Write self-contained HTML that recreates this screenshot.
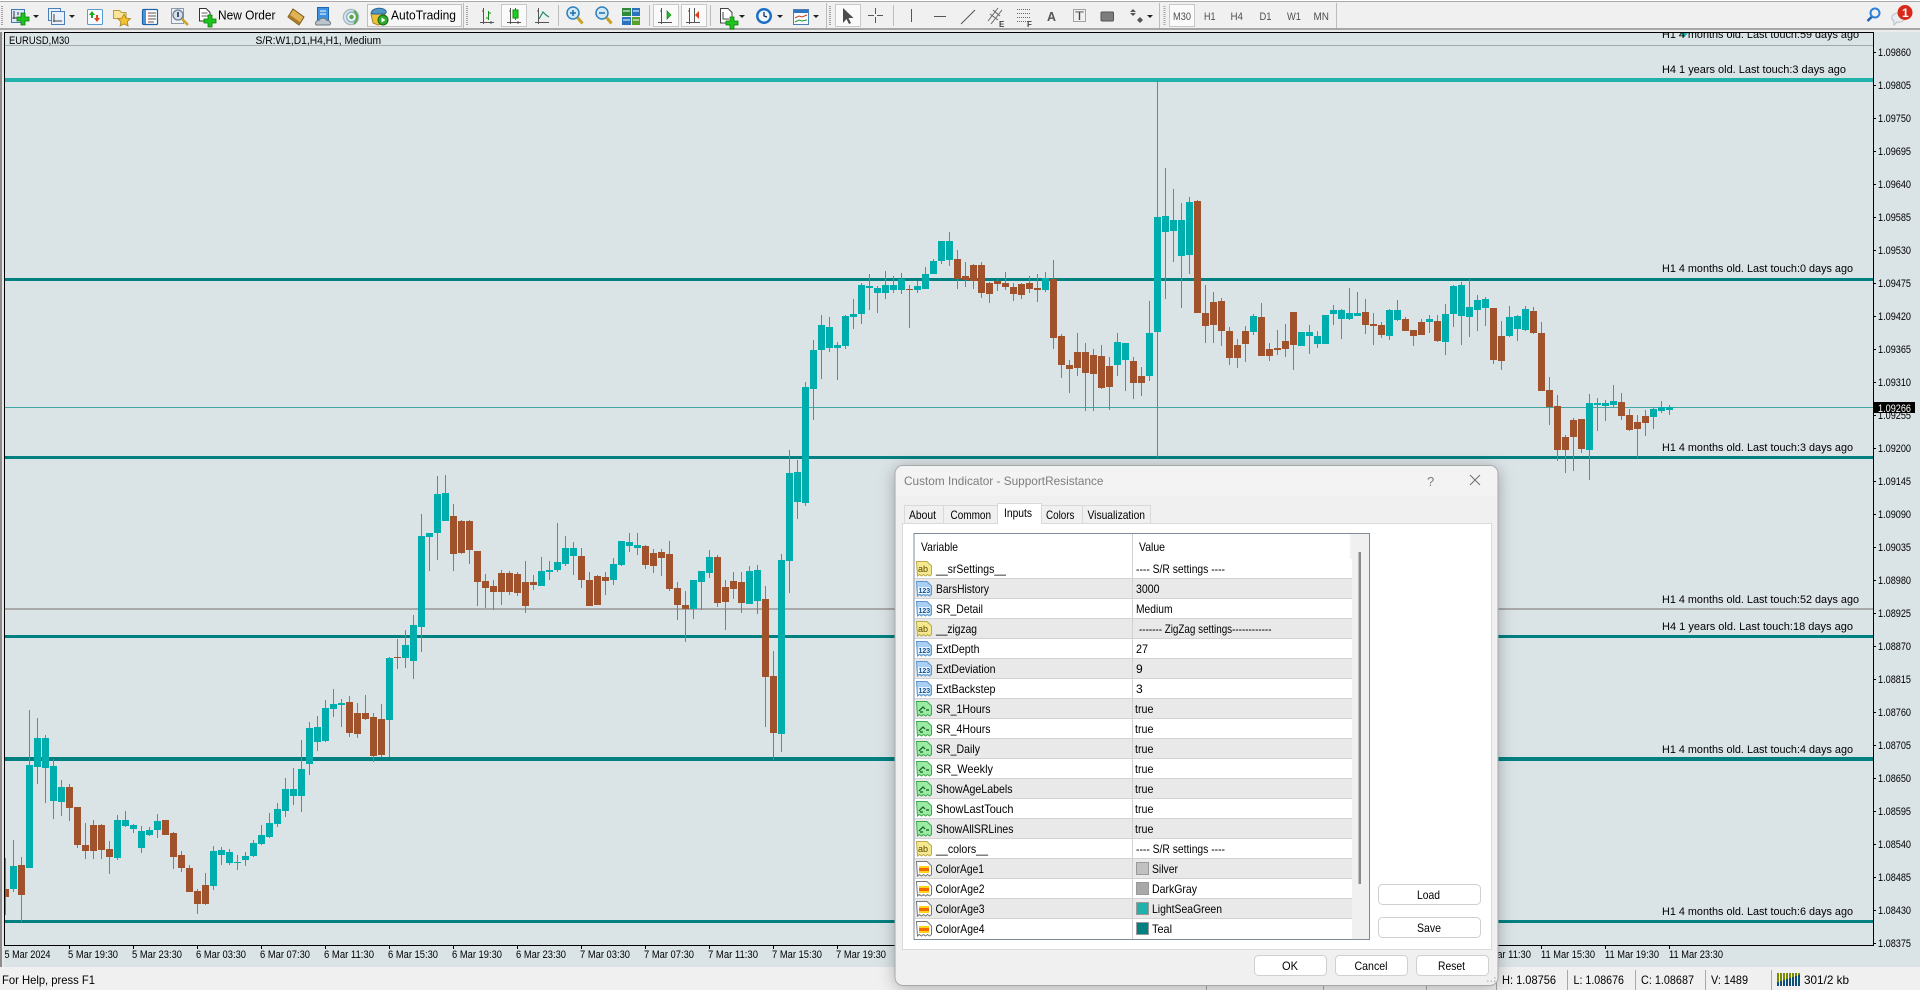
<!DOCTYPE html>
<html lang="en">
<head>
<meta charset="utf-8">
<title>EURUSD,M30</title>
<style>
html,body{margin:0;padding:0;width:1920px;height:990px;overflow:hidden;background:#f0f0f0}
svg{display:block;position:absolute;left:0;top:0}
text{font-family:"Liberation Sans",sans-serif;fill:#000}
.c{font-size:11px}
.d{font-size:12px}
.t{font-size:11px;fill:#505050}
</style>
</head>
<body>
<svg width="1920" height="990" viewBox="0 0 1920 990">
<defs>
<clipPath id="ca"><rect x="5" y="33" width="1868" height="912"/></clipPath>
<filter id="sh" x="-10%" y="-10%" width="120%" height="120%"><feDropShadow dx="0" dy="2" stdDeviation="8" flood-color="#000" flood-opacity=".28"/></filter>
<g id="doc"><path d="M.5 .5H11L15.5 5V13.5l-2 1.5-2-1.5-2 1.5-2-1.5-2 1.5-2-1.5-2 1.5z"/></g>
<g id="iab"><use href="#doc" fill="#f6e88e" stroke="#b8a94a"/><text x="2" y="11" style="font-size:9px;fill:#5a4a00">ab</text></g>
<g id="i12"><use href="#doc" fill="#a9d0f2" stroke="#5e97cc"/><rect x="2" y="6" width="12" height="7" fill="#eaf4ff"/><text x="2.5" y="12" style="font-size:7px;font-weight:bold;fill:#134f8f">123</text></g>
<g id="ibo"><use href="#doc" fill="#9ceba4" stroke="#3aa84a"/><path d="M3 10l4-4 2 2M10 9h3M4 11h3" fill="none" stroke="#0c5a1c" stroke-width="1.2"/></g>
<g id="ico"><use href="#doc" fill="#fff" stroke="#777"/><rect x="3" y="5" width="10" height="7" fill="#ffd21a"/><rect x="3" y="7" width="10" height="3" fill="#f56a00"/></g>
<g id="plus"><path d="M4 0h4v4h4v4H8v4H4V8H0V4h4z" fill="#1fc41f" stroke="#0a7d0a" stroke-width=".8"/></g>
<g id="ax"><path d="M3 0V15M0 14H14" fill="none" stroke="#555" stroke-width="1"/><path d="M0 3h3M10 12v3" stroke="#555"/></g>
<g id="arr"><path d="M0 0h6L3 3z" fill="#222"/></g>
</defs>

<!-- toolbar -->
<rect x="0" y="0" width="1920" height="32" fill="#f0f0f0"/>
<rect x="0" y="0" width="1920" height="1" fill="#fff"/>
<rect x="0" y="1" width="1920" height="1" fill="#a9a9a9"/>
<rect x="0" y="28" width="1920" height="2" fill="#a6a6a6"/>
<g fill="none" stroke="#a3a3a3" stroke-width="2" stroke-dasharray="1 1"><path d="M2 6V26M467 6V26M830 6V26M1164.500 6V26"/></g>
<g stroke="#bcbcbc" fill="none"><path d="M463.500 3V28M558.500 5V26M649.500 5V26M710.500 5V26M826.500 3V28M893.500 5V26M1159.500 3V28M1336.500 3V28"/></g>

<!-- new chart -->
<g transform="translate(11 8)"><rect x=".5" y="1.500" width="13" height="13" fill="#dceaf8" stroke="#3c78b8"/><path d="M3 3V11M1.500 10H10M7 4V7" stroke="#333" fill="none"/><use href="#plus" x="6" y="5"/></g>
<use href="#arr" x="33" y="15"/>
<g transform="translate(48 8)"><rect x=".5" y=".5" width="12" height="12" fill="#e8f0f9" stroke="#4a80ba"/><rect x="3.500" y="3.500" width="13" height="13" fill="#e8f0f9" stroke="#4a80ba"/><path d="M6 6V14M5 13H14" stroke="#444" fill="none"/></g>
<use href="#arr" x="69" y="15"/>
<!-- market watch -->
<g transform="translate(87 9)"><rect x=".5" y=".5" width="15" height="15" rx="1" fill="#f5fbff" stroke="#5a9ad0"/><path d="M5 2l-3 4h2v3h2V6h2z" fill="#21a821"/><path d="M10 13l3-4h-2V6H9v3H7z" fill="#e2401c"/></g>
<!-- star folder -->
<g transform="translate(113 8)"><path d="M.5 2.500h6l2 2H13v6H.5z" fill="#fbe39a" stroke="#b99a3a"/><path d="M11 6l2 4 4.500.6-3.200 3 .8 4.400-4-2.100-4 2.100.8-4.400-3.200-3L9 10z" fill="#f3c030" stroke="#a8801a" stroke-width=".8"/></g>
<!-- navigator -->
<g transform="translate(142 9)"><rect x=".5" y=".5" width="15" height="15" rx="1" fill="#fff" stroke="#1d62ac" stroke-width="1.200"/><rect x="1" y="1" width="3" height="14" fill="#4a92d8"/><path d="M6 4h8M6 7h8M6 10h8M6 13h6" stroke="#555"/><path d="M6 4h1M6 7h1M6 10h1M6 13h1" stroke="#d03020"/></g>
<!-- tester -->
<g transform="translate(171 8)"><rect x=".5" y=".5" width="12" height="15" fill="#eef2f6" stroke="#8a9aaa"/><circle cx="7" cy="7" r="5" fill="#d5e0ea" stroke="#6b7f92" stroke-width="1.300"/><path d="M7 4v5" stroke="#435a70" stroke-width="2"/><path d="M11 11l6 6" stroke="#c9a227" stroke-width="2.500"/></g>
<!-- new order -->
<g transform="translate(199 8)"><path d="M.5 .5H7L11 4.500V13H.5z" fill="#fff" stroke="#333"/><path d="M2.500 5h6M2.500 8h6" stroke="#666"/><use href="#plus" x="5" y="7"/></g>
<text x="218" y="19.500" style="font-size:12.500px" textLength="57.500" lengthAdjust="spacingAndGlyphs">New Order</text>
<!-- gold book -->
<g transform="translate(287 8)"><path d="M6 1l11 8-5 8L1 9z" fill="#e0b355" stroke="#7a5518"/><path d="M1 9l11 8 1.500-2.500L3 7" fill="#a87a28"/></g>
<!-- cloud doc -->
<g transform="translate(315 7)"><rect x="2.500" y=".5" width="11" height="13" fill="#3f92e0" stroke="#1e66b0"/><path d="M5 4h6M5 7h6" stroke="#fff"/><path d="M1 18c-1.500-3 1-5 3-4.500 1-3 7-3 8 0 3-.5 4.500 3 2.500 4.500z" fill="#b9c4cc" stroke="#6d7a85"/></g>
<!-- radio -->
<g transform="translate(342 8)" fill="none"><circle cx="9" cy="9" r="7.500" stroke="#a8b8c2" stroke-width="1.500"/><circle cx="9.500" cy="9" r="5" stroke="#7fb7c9" stroke-width="1.500"/><path d="M12 3c4 3 4 9 0 13" stroke="#58a84c" stroke-width="2"/><circle cx="9.500" cy="9" r="2.200" fill="#58a84c"/></g>
<!-- autotrading -->
<rect x="367.500" y="4.500" width="94" height="22" fill="#f7f7f7" stroke="#c0c0c0"/>
<g transform="translate(370 7)"><path d="M1 7h14l-1.500 9L8 18 3 16z" fill="#ecc03c" stroke="#a88820"/><path d="M1 6c2-6 12-6 15-2 1 2-1 3-4 3H3z" fill="#4d97c9" stroke="#2c6690"/><circle cx="13" cy="13" r="5" fill="#2eaa2e" stroke="#166a16"/><path d="M11.500 10.500l4 2.500-4 2.500z" fill="#fff"/></g>
<text x="391" y="19.500" style="font-size:12.500px" textLength="65" lengthAdjust="spacingAndGlyphs">AutoTrading</text>
<!-- chart types -->
<g fill="none" stroke="#555"><path d="M483.500 8V24M480 22.500H494M482 11h1.500M491 21v3"/><path d="M488.500 11V20M486 18h2.500M488.500 13H491" stroke="#138a13"/></g>
<rect x="501.500" y="4.500" width="25" height="22" fill="#fafafa" stroke="#c8c8c8"/>
<g fill="none" stroke="#555"><path d="M510.500 8V24M507 22.500H521M509 11h1.500M518 21v3"/><path d="M515.500 8V20"  stroke="#138a13"/></g><rect x="513" y="10" width="5" height="8" fill="#1fd11f" stroke="#138a13"/>
<g fill="none" stroke="#555"><path d="M538.500 8V24M535 22.500H549M537 11h1.500"/><path d="M539 19l4-7 3 3 3 2" stroke="#1e8a6a" stroke-width="1.200"/></g>
<!-- zoom -->
<g fill="none"><circle cx="573" cy="13" r="6" fill="#d3e8f8" stroke="#2f82bb" stroke-width="1.500"/><path d="M570 13h6M573 10v6" stroke="#1f6ea8" stroke-width="1.500"/><path d="M577.500 17.500l5 6" stroke="#c9a227" stroke-width="3"/><circle cx="602" cy="13" r="6" fill="#d3e8f8" stroke="#2f82bb" stroke-width="1.500"/><path d="M599 13h6" stroke="#1f6ea8" stroke-width="1.500"/><path d="M606.500 17.500l5 6" stroke="#c9a227" stroke-width="3"/></g>
<!-- tile -->
<g><rect x="622" y="8" width="9" height="8" fill="#2c8b3a"/><rect x="632" y="8" width="8" height="8" fill="#2a73c0"/><rect x="622" y="17" width="9" height="8" fill="#2a73c0"/><rect x="632" y="17" width="8" height="8" fill="#5aa02c"/><path d="M623 11h7M633 11h6M623 20h7M633 20h6" stroke="#fff"/></g>
<!-- autoscroll / shift -->
<rect x="653.500" y="4.500" width="25" height="22" fill="#fafafa" stroke="#c8c8c8"/>
<g fill="none" stroke="#555"><path d="M661.500 8V24M658 22.500H672M660 11h1.500"/></g><path d="M667 11l4 4-4 4z" fill="#24c024" stroke="#127a12" stroke-width=".7"/>
<rect x="681.500" y="4.500" width="25" height="22" fill="#fafafa" stroke="#c8c8c8"/>
<g fill="none" stroke="#555"><path d="M689.500 8V24M686 22.500H700M688 11h1.500M694.500 8V22"/></g><path d="M699 11l-4 4 4 4z" fill="#e03a1c"/>
<!-- templates -->
<g transform="translate(720 8)"><path d="M.5 .5H8L12 4.500V15H.5z" fill="#fff" stroke="#444"/><path d="M3 4v7h6" stroke="#444" fill="none"/><use href="#plus" x="6" y="9"/></g>
<use href="#arr" x="739" y="15"/>
<g transform="translate(756 7)"><circle cx="8" cy="9" r="8" fill="#1d6fc6"/><circle cx="8" cy="9" r="5.500" fill="#eef6ff"/><path d="M8 5v4l3 1" stroke="#123" fill="none" stroke-width="1.200"/></g>
<use href="#arr" x="777" y="15"/>
<g transform="translate(793 9)"><rect x=".5" y=".5" width="15" height="15" fill="#f8fbff" stroke="#4a7fb5"/><rect x="1" y="1" width="14" height="3" fill="#2f75c0"/><path d="M2 9l4-2 3 1 5-2" stroke="#c8401c" fill="none"/><path d="M2 13l4-2 3 1 5-1" stroke="#2a9a2a" fill="none"/></g>
<use href="#arr" x="813" y="15"/>
<!-- cursor -->
<rect x="835.500" y="4.500" width="25" height="22" fill="#fafafa" stroke="#c8c8c8"/>
<path d="M843 8l0 15 3.500-4 2.500 5 2-1-2.500-5h5z" fill="#4b4b4b"/>
<g stroke="#555" fill="none"><path d="M875.500 8V14M875.500 17V23M868 15.500H874M877 15.500H883M911.500 9V22M934 16.500H946M961 24L975 10" stroke-width="1"/></g>
<g stroke="#666" fill="none"><path d="M988 21L998 8M991 24L1002 10M990 14l8 6M993 10l7 6"/><path d="M1017 9.500h14M1017 13.500h14M1017 17.500h14M1017 21.500h11" stroke-dasharray="1 1"/></g>
<text x="999" y="27" style="font-size:8px;font-weight:bold;fill:#444">E</text>
<text x="1027" y="27" style="font-size:8px;font-weight:bold;fill:#444">F</text>
<text x="1047" y="21" style="font-size:13px;font-weight:bold;fill:#555" textLength="9" lengthAdjust="spacingAndGlyphs">A</text>
<rect x="1073.500" y="9.500" width="12" height="12" fill="none" stroke="#555" stroke-dasharray="1 1"/>
<text x="1075" y="20" style="font-size:12px;fill:#444" textLength="9" lengthAdjust="spacingAndGlyphs">T</text>
<rect x="1101" y="12" width="12.500" height="9" rx="1" fill="#7d7d7d" stroke="#555"/>
<path d="M1133 9l3 3h-6zM1133 16l-3-3h6zM1140 17l3 3-3 3-3-3z" fill="#555"/>
<use href="#arr" x="1147" y="15"/>
<!-- timeframes -->
<rect x="1169.500" y="4.500" width="25" height="22" fill="#fafafa" stroke="#c8c8c8"/>
<text class="t" x="1173" y="20" textLength="18" lengthAdjust="spacingAndGlyphs">M30</text>
<text class="t" x="1204" y="20" textLength="11.500" lengthAdjust="spacingAndGlyphs">H1</text>
<text class="t" x="1230.500" y="20" textLength="12.500" lengthAdjust="spacingAndGlyphs">H4</text>
<text class="t" x="1259.500" y="20" textLength="12" lengthAdjust="spacingAndGlyphs">D1</text>
<text class="t" x="1287" y="20" textLength="14" lengthAdjust="spacingAndGlyphs">W1</text>
<text class="t" x="1313.500" y="20" textLength="15.500" lengthAdjust="spacingAndGlyphs">MN</text>
<!-- right toolbar -->
<g fill="none"><circle cx="1875" cy="13" r="4.500" stroke="#2b80d8" stroke-width="2"/><path d="M1871.500 17l-4 4" stroke="#1f5fb0" stroke-width="2.500"/></g>
<path d="M1893 15c3-3 11-3 12 0 2 5-4 8-8 7l-3 3 0-4c-2-1-3-4-1-6z" fill="#e9edf0" stroke="#b7bfc6"/>
<circle cx="1905" cy="12.500" r="7.500" fill="#d9281a"/>
<text x="1902" y="17" style="font-size:12px;font-weight:bold;fill:#fff">1</text>

<!-- chart window -->
<rect x="0" y="30" width="1920" height="2" fill="#ececec"/>
<rect x="0" y="32" width="2" height="935" fill="#8c8c8c"/>
<rect x="2" y="32" width="2" height="935" fill="#e8e8e8"/>
<rect x="4" y="32" width="1916" height="935" fill="#dae3e6"/>

<g clip-path="url(#ca)">
<!-- horizontal lines -->
<rect x="5" y="45" width="1868" height="1" fill="#a4a8aa"/>
<rect x="5" y="78" width="1869" height="4" fill="#20b2aa"/>
<rect x="5" y="278" width="1869" height="3" fill="#008080"/>
<rect x="5" y="407" width="1869" height="1" fill="#3fa8a4"/>
<rect x="5" y="456" width="1869" height="3" fill="#008080"/>
<rect x="5" y="608" width="1869" height="2" fill="#a9a9a9"/>
<rect x="5" y="635" width="1869" height="3" fill="#008080"/>
<rect x="5" y="757" width="1869" height="4" fill="#008080"/>
<rect x="5" y="920" width="1869" height="3" fill="#008080"/>
<!-- labels -->
<polygon points="1680,33 1688,33 1684,37.500" fill="#20b2aa"/>
<text class="c" x="1662" y="38" textLength="197" lengthAdjust="spacingAndGlyphs">H1 4 months old. Last touch:59 days ago</text>
<text class="c" x="1662" y="73" textLength="184" lengthAdjust="spacingAndGlyphs">H4 1 years old. Last touch:3 days ago</text>
<text class="c" x="1662" y="272" textLength="191" lengthAdjust="spacingAndGlyphs">H1 4 months old. Last touch:0 days ago</text>
<text class="c" x="1662" y="451" textLength="191" lengthAdjust="spacingAndGlyphs">H1 4 months old. Last touch:3 days ago</text>
<text class="c" x="1662" y="603" textLength="197" lengthAdjust="spacingAndGlyphs">H1 4 months old. Last touch:52 days ago</text>
<text class="c" x="1662" y="630" textLength="191" lengthAdjust="spacingAndGlyphs">H4 1 years old. Last touch:18 days ago</text>
<text class="c" x="1662" y="753" textLength="191" lengthAdjust="spacingAndGlyphs">H1 4 months old. Last touch:4 days ago</text>
<text class="c" x="1662" y="915" textLength="191" lengthAdjust="spacingAndGlyphs">H1 4 months old. Last touch:6 days ago</text>

<!-- candles A -->
<g transform="matrix(1 0 0 .33333333 0 680)" shape-rendering="crispEdges">
<path stroke="#708090" fill="none" d="M5.500 534V705M13.500 480V636M21.500 531V726M29.500 90V564M37.500 114V312M45.500 165V369M53.500 237V417M61.500 300V408M69.500 312V423M77.500 381V504M85.500 429V537M93.500 420V537M101.500 432V537M109.500 483V582M117.500 405V540M125.500 393V441M133.500 432V459M141.500 438V519M149.500 441V468M157.500 402V474M165.500 420V465M173.500 456V567M181.500 513V576M189.500 555V636M197.500 627V702M205.500 579V675M213.500 498V630M221.500 501V555M229.500 507V555M237.500 525V570M245.500 516V558M253.500 480V531M261.500 435V495M269.500 399V474M277.500 369V441M285.500 294V411M293.500 264V375M301.500 180V396M309.500 126V285M317.500 108V213M325.500 60V186M333.500 27V111M341.500 57V141M349.500 48V171M357.500 69V174M365.500 45V120M373.500 99V246M381.500 72V232"/>
<path fill="#00adad" d="M10 558h7V627h-7zM26 255h7V564h-7zM34 174h7V261h-7zM42 174h7V264h-7zM50 258h7V363h-7zM58 321h7V366h-7zM114 420h7V534h-7zM122 420h7V438h-7zM130 435h7V447h-7zM138 453h7V504h-7zM146 450h7V465h-7zM154 423h7V450h-7zM210 513h7V618h-7zM218 510h7V525h-7zM226 516h7V549h-7zM234 546h7V549h-7zM242 528h7V540h-7zM250 489h7V528h-7zM258 465h7V492h-7zM266 429h7V471h-7zM274 387h7V432h-7zM282 327h7V393h-7zM290 327h7V348h-7zM298 267h7V348h-7zM306 144h7V252h-7zM314 141h7V186h-7zM322 84h7V183h-7zM330 72h7V87h-7zM338 69h7V75h-7z"/>
<path fill="#a0522d" d="M2 627h7V651h-7zM18 555h7V645h-7zM66 321h7V384h-7zM74 381h7V495h-7zM82 495h7V513h-7zM90 435h7V513h-7zM98 435h7V510h-7zM106 507h7V531h-7zM162 420h7V465h-7zM170 459h7V531h-7zM178 525h7V564h-7zM186 564h7V636h-7zM194 633h7V672h-7zM202 615h7V672h-7zM346 66h7V159h-7zM354 99h7V162h-7zM362 99h7V117h-7zM370 111h7V228h-7zM378 117h7V225h-7z"/>
</g>
<!-- candles B -->
<g transform="matrix(1 0 0 .33333333 0 440)" shape-rendering="crispEdges">
<path stroke="#708090" fill="none" d="M389.500 651V951M397.500 597V687M405.500 570V684M413.500 525V717M421.500 222V636M429.500 279V393M437.500 108V360M445.500 105V243M453.500 192V393M461.500 240V342M469.500 240V372M477.500 333V498M485.500 402V504M493.500 420V510M501.500 390V495M509.500 393V465M517.500 396V468M525.500 363V519M533.500 405V450M541.500 351V438M549.500 363V420M557.500 249V396M565.500 288V378M573.500 306V405M581.500 324V444M589.500 396V498M597.500 405V495M605.500 396V465M613.500 354V435M621.500 303V378M629.500 279V336M637.500 279V345M645.500 315V387M653.500 327V399M661.500 327V408M669.500 303V453M677.500 426V540M685.500 453V606M693.500 420V537M701.500 393V510M709.500 330V414M717.500 345V501M725.500 420V570M733.500 396V477M741.500 396V519M749.500 378V492M757.500 375V522M765.500 438V861M773.500 633V960M781.500 342V936M789.500 30V459M797.500 60V237M805.500 -174V198"/>
<path fill="#00adad" d="M386 654h7V840h-7zM402 615h7V654h-7zM410 555h7V663h-7zM418 288h7V561h-7zM426 279h7V291h-7zM434 162h7V279h-7zM442 159h7V243h-7zM538 393h7V438h-7zM546 390h7V396h-7zM554 366h7V390h-7zM562 324h7V372h-7zM570 324h7V348h-7zM610 372h7V420h-7zM618 303h7V375h-7zM626 306h7V318h-7zM634 315h7V324h-7zM690 420h7V507h-7zM698 393h7V426h-7zM706 351h7V399h-7zM746 393h7V492h-7zM754 390h7V483h-7zM778 360h7V882h-7zM786 99h7V363h-7zM794 96h7V186h-7zM802 -159h7V189h-7z"/>
<path fill="#a0522d" d="M394 651h7V654h-7zM450 228h7V342h-7zM458 243h7V339h-7zM466 243h7V330h-7zM474 333h7V426h-7zM482 423h7V444h-7zM490 438h7V456h-7zM498 399h7V456h-7zM506 399h7V456h-7zM514 402h7V459h-7zM522 426h7V498h-7zM530 426h7V435h-7zM578 348h7V420h-7zM586 420h7V498h-7zM594 408h7V495h-7zM602 411h7V423h-7zM642 318h7V375h-7zM650 339h7V378h-7zM658 336h7V354h-7zM666 342h7V447h-7zM674 444h7V495h-7zM682 495h7V507h-7zM714 351h7V489h-7zM722 441h7V486h-7zM730 423h7V447h-7zM738 426h7V489h-7zM762 477h7V711h-7zM770 708h7V879h-7z"/>
</g>
<!-- candles C -->
<g transform="matrix(1 0 0 .33333333 0 200)" shape-rendering="crispEdges">
<path stroke="#708090" fill="none" d="M813.500 420V660M821.500 345V537M829.500 351V456M837.500 426V540M845.500 345V447M853.500 297V387M861.500 249V372M869.500 222V330M877.500 258V339M885.500 213V297M893.500 228V279M901.500 219V282M909.500 255V384M917.500 243V279M925.500 201V267M933.500 177V222M941.500 123V192M949.500 96V198M957.500 150V267M965.500 186V261M973.500 192V267M981.500 186V294M989.500 246V309M997.500 237V273M1005.500 216V270M1013.500 249V303M1021.500 249V297M1029.500 228V279M1037.500 222V306M1045.500 216V276M1053.500 180V447M1061.500 402V534M1069.500 480V579M1077.500 399V528M1085.500 429V633M1093.500 447V633M1101.500 435V567M1109.500 471V630M1117.500 399V528M1125.500 429V573M1133.500 471V597M1141.500 501V588M1149.500 303V543"/>
<path fill="#00adad" d="M810 450h7V567h-7zM818 375h7V450h-7zM826 381h7V444h-7zM834 435h7V444h-7zM842 348h7V438h-7zM850 342h7V351h-7zM858 255h7V342h-7zM866 258h7V264h-7zM874 264h7V279h-7zM882 255h7V279h-7zM890 255h7V270h-7zM898 237h7V270h-7zM914 258h7V270h-7zM922 222h7V267h-7zM930 183h7V222h-7zM938 123h7V183h-7zM946 123h7V180h-7zM1042 234h7V270h-7zM1114 426h7V495h-7zM1122 429h7V480h-7zM1146 399h7V528h-7z"/>
<path fill="#a0522d" d="M906 267h7V270h-7zM954 177h7V237h-7zM962 228h7V240h-7zM970 195h7V243h-7zM978 195h7V279h-7zM986 249h7V282h-7zM994 243h7V252h-7zM1002 249h7V261h-7zM1010 261h7V282h-7zM1018 252h7V285h-7zM1026 249h7V267h-7zM1034 264h7V270h-7zM1050 237h7V414h-7zM1058 408h7V495h-7zM1066 495h7V507h-7zM1074 456h7V504h-7zM1082 456h7V519h-7zM1090 465h7V522h-7zM1098 468h7V564h-7zM1106 498h7V561h-7zM1130 483h7V549h-7zM1138 528h7V549h-7z"/>
</g>
<!-- candles D -->
<g transform="matrix(1 0 0 .33333333 0 150)" shape-rendering="crispEdges">
<path stroke="#708090" fill="none" d="M1157.500 -210V922M1165.500 54V447M1173.500 117V336M1181.500 159V474M1189.500 141V372M1197.500 150V489M1205.500 405V579M1213.500 426V579M1221.500 444V588M1229.500 531V645M1237.500 567V654M1245.500 528V636M1253.500 492V555M1261.500 459V618M1269.500 579V633M1277.500 540V615M1285.500 522V621M1293.500 486V660M1301.500 546V588M1309.500 525V612M1317.500 543V594M1325.500 495V582M1333.500 465V525M1341.500 477V567M1349.500 414V510M1357.500 426V498M1365.500 447V552M1373.500 489V585M1381.500 516V564M1389.500 477V570M1397.500 450V513M1405.500 501V543M1413.500 540V588M1421.500 507V555M1429.500 495V549M1437.500 495V576M1445.500 462V615M1453.500 405V531M1461.500 396V585M1469.500 387V561M1477.500 435V543M1485.500 441V528M1493.500 474V642M1501.500 513V660M1509.500 468V561M1517.500 495V573M1525.500 468V543M1533.500 471V552M1541.500 516V723M1549.500 681V825M1557.500 735V933M1565.500 855V969M1573.500 804V963M1581.500 807V909M1589.500 732V990M1597.500 744V843M1605.500 750V813M1613.500 705V771M1621.500 729V810M1629.500 777V843M1637.500 795V924M1645.500 780V858M1653.500 774V837M1661.500 753V789M1669.500 765V795"/>
<path fill="#00adad" d="M1154 201h7V546h-7zM1162 198h7V246h-7zM1170 210h7V243h-7zM1178 210h7V318h-7zM1186 156h7V315h-7zM1250 498h7V546h-7zM1298 546h7V588h-7zM1306 546h7V558h-7zM1314 558h7V582h-7zM1322 495h7V582h-7zM1330 480h7V492h-7zM1338 480h7V507h-7zM1346 489h7V507h-7zM1354 489h7V498h-7zM1386 480h7V558h-7zM1394 480h7V510h-7zM1426 507h7V516h-7zM1442 492h7V576h-7zM1450 408h7V492h-7zM1458 405h7V498h-7zM1466 471h7V501h-7zM1474 450h7V480h-7zM1482 447h7V474h-7zM1506 501h7V558h-7zM1514 498h7V537h-7zM1522 477h7V540h-7zM1586 759h7V900h-7zM1594 759h7V765h-7zM1602 759h7V768h-7zM1610 753h7V765h-7zM1650 777h7V801h-7zM1658 771h7V783h-7zM1666 771h7V780h-7z"/>
<path fill="#a0522d" d="M1194 153h7V489h-7zM1202 489h7V528h-7zM1210 456h7V525h-7zM1218 453h7V543h-7zM1226 543h7V624h-7zM1234 585h7V624h-7zM1242 543h7V582h-7zM1258 501h7V618h-7zM1266 597h7V618h-7zM1274 594h7V600h-7zM1282 573h7V597h-7zM1290 486h7V585h-7zM1362 486h7V525h-7zM1370 522h7V528h-7zM1378 525h7V555h-7zM1402 507h7V543h-7zM1410 540h7V558h-7zM1418 516h7V555h-7zM1434 513h7V573h-7zM1490 474h7V630h-7zM1498 558h7V633h-7zM1530 483h7V549h-7zM1538 549h7V723h-7zM1546 720h7V771h-7zM1554 768h7V900h-7zM1562 861h7V900h-7zM1570 810h7V861h-7zM1578 807h7V897h-7zM1618 756h7V798h-7zM1626 795h7V840h-7zM1634 816h7V837h-7zM1642 798h7V819h-7z"/>
</g>
</g>

<!-- frame -->
<rect x="4" y="32" width="1870" height="1" fill="#000"/>
<rect x="4" y="32" width="1" height="914" fill="#000"/>
<rect x="1873" y="32" width="1" height="914" fill="#000"/>
<rect x="4" y="945" width="1870" height="1" fill="#000"/>
<text class="c" x="9" y="44" textLength="60.500" lengthAdjust="spacingAndGlyphs">EURUSD,M30</text>
<text class="c" x="255.500" y="44" textLength="125.500" lengthAdjust="spacingAndGlyphs">S/R:W1,D1,H4,H1, Medium</text>

<!-- price axis -->
<path stroke="#000" fill="none" d="M1874 52.500h2M1874 85.500h2M1874 118.500h2M1874 151.500h2M1874 184.500h2M1874 217.500h2M1874 250.500h2M1874 283.500h2M1874 316.500h2M1874 349.500h2M1874 382.500h2M1874 415.500h2M1874 448.500h2M1874 481.500h2M1874 514.500h2M1874 547.500h2M1874 580.500h2M1874 613.500h2M1874 646.500h2M1874 679.500h2M1874 712.500h2M1874 745.500h2M1874 778.500h2M1874 811.500h2M1874 844.500h2M1874 877.500h2M1874 910.500h2M1874 943.500h2"/>
<g class="c">
<text class="c" x="1878" y="56" textLength="33" lengthAdjust="spacingAndGlyphs">1.09860</text>
<text class="c" x="1878" y="89" textLength="33" lengthAdjust="spacingAndGlyphs">1.09805</text>
<text class="c" x="1878" y="122" textLength="33" lengthAdjust="spacingAndGlyphs">1.09750</text>
<text class="c" x="1878" y="155" textLength="33" lengthAdjust="spacingAndGlyphs">1.09695</text>
<text class="c" x="1878" y="188" textLength="33" lengthAdjust="spacingAndGlyphs">1.09640</text>
<text class="c" x="1878" y="221" textLength="33" lengthAdjust="spacingAndGlyphs">1.09585</text>
<text class="c" x="1878" y="254" textLength="33" lengthAdjust="spacingAndGlyphs">1.09530</text>
<text class="c" x="1878" y="287" textLength="33" lengthAdjust="spacingAndGlyphs">1.09475</text>
<text class="c" x="1878" y="320" textLength="33" lengthAdjust="spacingAndGlyphs">1.09420</text>
<text class="c" x="1878" y="353" textLength="33" lengthAdjust="spacingAndGlyphs">1.09365</text>
<text class="c" x="1878" y="386" textLength="33" lengthAdjust="spacingAndGlyphs">1.09310</text>
<text class="c" x="1878" y="419" textLength="33" lengthAdjust="spacingAndGlyphs">1.09255</text>
<text class="c" x="1878" y="452" textLength="33" lengthAdjust="spacingAndGlyphs">1.09200</text>
<text class="c" x="1878" y="485" textLength="33" lengthAdjust="spacingAndGlyphs">1.09145</text>
<text class="c" x="1878" y="518" textLength="33" lengthAdjust="spacingAndGlyphs">1.09090</text>
<text class="c" x="1878" y="551" textLength="33" lengthAdjust="spacingAndGlyphs">1.09035</text>
<text class="c" x="1878" y="584" textLength="33" lengthAdjust="spacingAndGlyphs">1.08980</text>
<text class="c" x="1878" y="617" textLength="33" lengthAdjust="spacingAndGlyphs">1.08925</text>
<text class="c" x="1878" y="650" textLength="33" lengthAdjust="spacingAndGlyphs">1.08870</text>
<text class="c" x="1878" y="683" textLength="33" lengthAdjust="spacingAndGlyphs">1.08815</text>
<text class="c" x="1878" y="716" textLength="33" lengthAdjust="spacingAndGlyphs">1.08760</text>
<text class="c" x="1878" y="749" textLength="33" lengthAdjust="spacingAndGlyphs">1.08705</text>
<text class="c" x="1878" y="782" textLength="33" lengthAdjust="spacingAndGlyphs">1.08650</text>
<text class="c" x="1878" y="815" textLength="33" lengthAdjust="spacingAndGlyphs">1.08595</text>
<text class="c" x="1878" y="848" textLength="33" lengthAdjust="spacingAndGlyphs">1.08540</text>
<text class="c" x="1878" y="881" textLength="33" lengthAdjust="spacingAndGlyphs">1.08485</text>
<text class="c" x="1878" y="914" textLength="33" lengthAdjust="spacingAndGlyphs">1.08430</text>
<text class="c" x="1878" y="947" textLength="33" lengthAdjust="spacingAndGlyphs">1.08375</text>
</g>
<rect x="1874" y="402" width="41" height="11" fill="#000"/>
<text class="c" x="1878" y="412" style="fill:#fff" textLength="33" lengthAdjust="spacingAndGlyphs">1.09266</text>

<!-- time axis -->
<path stroke="#000" fill="none" d="M69.500 946v3M133.500 946v3M197.500 946v3M261.500 946v3M325.500 946v3M389.500 946v3M453.500 946v3M517.500 946v3M581.500 946v3M645.500 946v3M709.500 946v3M773.500 946v3M837.500 946v3M1541.500 946v3M1605.500 946v3M1669.500 946v3"/>
<text class="c" x="4.500" y="958" textLength="46" lengthAdjust="spacingAndGlyphs">5 Mar 2024</text>
<text class="c" x="68" y="958" textLength="50" lengthAdjust="spacingAndGlyphs">5 Mar 19:30</text>
<text class="c" x="132" y="958" textLength="50" lengthAdjust="spacingAndGlyphs">5 Mar 23:30</text>
<text class="c" x="196" y="958" textLength="50" lengthAdjust="spacingAndGlyphs">6 Mar 03:30</text>
<text class="c" x="260" y="958" textLength="50" lengthAdjust="spacingAndGlyphs">6 Mar 07:30</text>
<text class="c" x="324" y="958" textLength="50" lengthAdjust="spacingAndGlyphs">6 Mar 11:30</text>
<text class="c" x="388" y="958" textLength="50" lengthAdjust="spacingAndGlyphs">6 Mar 15:30</text>
<text class="c" x="452" y="958" textLength="50" lengthAdjust="spacingAndGlyphs">6 Mar 19:30</text>
<text class="c" x="516" y="958" textLength="50" lengthAdjust="spacingAndGlyphs">6 Mar 23:30</text>
<text class="c" x="580" y="958" textLength="50" lengthAdjust="spacingAndGlyphs">7 Mar 03:30</text>
<text class="c" x="644" y="958" textLength="50" lengthAdjust="spacingAndGlyphs">7 Mar 07:30</text>
<text class="c" x="708" y="958" textLength="50" lengthAdjust="spacingAndGlyphs">7 Mar 11:30</text>
<text class="c" x="772" y="958" textLength="50" lengthAdjust="spacingAndGlyphs">7 Mar 15:30</text>
<text class="c" x="836" y="958" textLength="50" lengthAdjust="spacingAndGlyphs">7 Mar 19:30</text>
<text class="c" x="1477" y="958" textLength="54" lengthAdjust="spacingAndGlyphs">11 Mar 11:30</text>
<text class="c" x="1541" y="958" textLength="54" lengthAdjust="spacingAndGlyphs">11 Mar 15:30</text>
<text class="c" x="1605" y="958" textLength="54" lengthAdjust="spacingAndGlyphs">11 Mar 19:30</text>
<text class="c" x="1669" y="958" textLength="54" lengthAdjust="spacingAndGlyphs">11 Mar 23:30</text>

<!-- status bar -->
<rect x="0" y="967" width="1920" height="23" fill="#f0f0f0"/>
<text class="d" x="2" y="984" textLength="93" lengthAdjust="spacingAndGlyphs">For Help, press F1</text>
<path stroke="#a8a8a8" fill="none" d="M1206.500 970V990M1323.500 970V990M1426.500 970V990M1496.500 970V990M1567.500 970V990M1635.500 970V990M1705.500 970V990M1771.500 970V990"/>
<text class="d" x="1502" y="984" textLength="54" lengthAdjust="spacingAndGlyphs">H: 1.08756</text>
<text class="d" x="1573.500" y="984" textLength="50.500" lengthAdjust="spacingAndGlyphs">L: 1.08676</text>
<text class="d" x="1641" y="984" textLength="53" lengthAdjust="spacingAndGlyphs">C: 1.08687</text>
<text class="d" x="1711" y="984" textLength="37" lengthAdjust="spacingAndGlyphs">V: 1489</text>
<g shape-rendering="crispEdges"><path stroke="#7b8a00" stroke-width="2" fill="none" d="M1778 973V982M1781 973V981M1784 973V980M1787 973V979M1790 973V978M1793 973V977M1796 973V976M1799 973V975"/><path stroke="#0f4f7a" stroke-width="2" fill="none" d="M1778 982V986M1781 981V986M1784 980V986M1787 979V986M1790 978V986M1793 977V986M1796 976V986M1799 975V986"/></g>
<text class="d" x="1804" y="984" textLength="45" lengthAdjust="spacingAndGlyphs">301/2 kb</text>

<!-- dialog -->
<rect x="895" y="465.500" width="603" height="520" rx="8" fill="#f0f0f0" stroke="#a8a8a8" filter="url(#sh)"/>
<path d="M903 466H1490a7.500 7.500 0 0 1 7.500 7.500V496H895.500V473.500A7.500 7.500 0 0 1 903 466z" fill="#f3f3f3"/>
<text class="d" x="904" y="485" style="fill:#7d7d7d" textLength="199.500" lengthAdjust="spacingAndGlyphs">Custom Indicator - SupportResistance</text>
<text class="d" x="1427" y="486" style="fill:#7d7d7d;font-size:13px">?</text>
<path d="M1470 475L1480 485M1480 475L1470 485" stroke="#6f6f6f" fill="none"/>

<!-- tabs -->
<rect x="902.500" y="523.500" width="589" height="426" fill="#fff" stroke="#d9d9d9"/>
<path d="M904.500 523V505.500H943.500V523M943.500 523V505.500H997.500V523M1041.500 523V505.500H1082.500V523M1082.500 523V505.500H1150.500V523" fill="#f0f0f0" stroke="#d9d9d9"/>
<path d="M997.500 524V503.500H1041.500V524" fill="#fff" stroke="#d9d9d9"/>
<text class="d" x="909" y="519" textLength="27" lengthAdjust="spacingAndGlyphs">About</text>
<text class="d" x="950.500" y="519" textLength="40.500" lengthAdjust="spacingAndGlyphs">Common</text>
<text class="d" x="1004" y="517" textLength="28" lengthAdjust="spacingAndGlyphs">Inputs</text>
<text class="d" x="1046" y="519" textLength="28.500" lengthAdjust="spacingAndGlyphs">Colors</text>
<text class="d" x="1087.500" y="519" textLength="57.500" lengthAdjust="spacingAndGlyphs">Visualization</text>

<!-- list -->
<rect x="914" y="533.500" width="455.500" height="406" fill="#fff" stroke="#7f8b99"/>
<rect x="1352" y="534" width="17" height="405" fill="#f0f0f0"/>
<rect x="1358.500" y="552" width="2.500" height="332" fill="#8a8a8a"/>
<rect x="1350.500" y="534" width="1" height="25" fill="#e5e5e5"/>
<text class="d" x="921" y="551" textLength="37" lengthAdjust="spacingAndGlyphs">Variable</text>
<text class="d" x="1139" y="551" textLength="26" lengthAdjust="spacingAndGlyphs">Value</text>
<g fill="#e9e9e9"><rect x="915" y="579" width="437" height="20"/><rect x="915" y="619" width="437" height="20"/><rect x="915" y="659" width="437" height="20"/><rect x="915" y="699" width="437" height="20"/><rect x="915" y="739" width="437" height="20"/><rect x="915" y="779" width="437" height="20"/><rect x="915" y="819" width="437" height="20"/><rect x="915" y="859" width="437" height="20"/><rect x="915" y="899" width="437" height="20"/></g>
<path stroke="#d2d2d2" fill="none" d="M915 578.500H1352M915 598.500H1352M915 618.500H1352M915 638.500H1352M915 658.500H1352M915 678.500H1352M915 698.500H1352M915 718.500H1352M915 738.500H1352M915 758.500H1352M915 778.500H1352M915 798.500H1352M915 818.500H1352M915 838.500H1352M915 858.500H1352M915 878.500H1352M915 898.500H1352M915 918.500H1352M1132.500 534V939"/>

<use href="#iab" x="916" y="561"/>
<use href="#i12" x="916" y="581"/>
<use href="#i12" x="916" y="601"/>
<use href="#iab" x="916" y="621"/>
<use href="#i12" x="916" y="641"/>
<use href="#i12" x="916" y="661"/>
<use href="#i12" x="916" y="681"/>
<use href="#ibo" x="916" y="701"/>
<use href="#ibo" x="916" y="721"/>
<use href="#ibo" x="916" y="741"/>
<use href="#ibo" x="916" y="761"/>
<use href="#ibo" x="916" y="781"/>
<use href="#ibo" x="916" y="801"/>
<use href="#ibo" x="916" y="821"/>
<use href="#iab" x="916" y="841"/>
<use href="#ico" x="916" y="861"/>
<use href="#ico" x="916" y="881"/>
<use href="#ico" x="916" y="901"/>
<use href="#ico" x="916" y="921"/>

<text class="d" x="936" y="573" textLength="70" lengthAdjust="spacingAndGlyphs">__srSettings__</text>
<text class="d" x="936" y="593" textLength="53" lengthAdjust="spacingAndGlyphs">BarsHistory</text>
<text class="d" x="936" y="613" textLength="47" lengthAdjust="spacingAndGlyphs">SR_Detail</text>
<text class="d" x="936" y="633" textLength="41" lengthAdjust="spacingAndGlyphs">__zigzag</text>
<text class="d" x="936" y="653" textLength="43.500" lengthAdjust="spacingAndGlyphs">ExtDepth</text>
<text class="d" x="936" y="673" textLength="59.500" lengthAdjust="spacingAndGlyphs">ExtDeviation</text>
<text class="d" x="936" y="693" textLength="59.500" lengthAdjust="spacingAndGlyphs">ExtBackstep</text>
<text class="d" x="936" y="713" textLength="54.500" lengthAdjust="spacingAndGlyphs">SR_1Hours</text>
<text class="d" x="936" y="733" textLength="54.500" lengthAdjust="spacingAndGlyphs">SR_4Hours</text>
<text class="d" x="936" y="753" textLength="44" lengthAdjust="spacingAndGlyphs">SR_Daily</text>
<text class="d" x="936" y="773" textLength="57" lengthAdjust="spacingAndGlyphs">SR_Weekly</text>
<text class="d" x="936" y="793" textLength="76.500" lengthAdjust="spacingAndGlyphs">ShowAgeLabels</text>
<text class="d" x="936" y="813" textLength="77.500" lengthAdjust="spacingAndGlyphs">ShowLastTouch</text>
<text class="d" x="936" y="833" textLength="77.500" lengthAdjust="spacingAndGlyphs">ShowAllSRLines</text>
<text class="d" x="936" y="853" textLength="52" lengthAdjust="spacingAndGlyphs">__colors__</text>
<text class="d" x="935.500" y="873" textLength="48.500" lengthAdjust="spacingAndGlyphs">ColorAge1</text>
<text class="d" x="935.500" y="893" textLength="49" lengthAdjust="spacingAndGlyphs">ColorAge2</text>
<text class="d" x="935.500" y="913" textLength="49" lengthAdjust="spacingAndGlyphs">ColorAge3</text>
<text class="d" x="935.500" y="933" textLength="49" lengthAdjust="spacingAndGlyphs">ColorAge4</text>

<text class="d" x="1136" y="573" textLength="89" lengthAdjust="spacingAndGlyphs">---- S/R settings ----</text>
<text class="d" x="1136" y="593" textLength="23.500" lengthAdjust="spacingAndGlyphs">3000</text>
<text class="d" x="1136" y="613" textLength="36.500" lengthAdjust="spacingAndGlyphs">Medium</text>
<text class="d" x="1139" y="633" textLength="132.500" lengthAdjust="spacingAndGlyphs">------- ZigZag settings------------</text>
<text class="d" x="1136" y="653" textLength="12" lengthAdjust="spacingAndGlyphs">27</text>
<text class="d" x="1136" y="673">9</text>
<text class="d" x="1136" y="693">3</text>
<text class="d" x="1135" y="713" textLength="18.500" lengthAdjust="spacingAndGlyphs">true</text>
<text class="d" x="1135" y="733" textLength="18.500" lengthAdjust="spacingAndGlyphs">true</text>
<text class="d" x="1135" y="753" textLength="18.500" lengthAdjust="spacingAndGlyphs">true</text>
<text class="d" x="1135" y="773" textLength="18.500" lengthAdjust="spacingAndGlyphs">true</text>
<text class="d" x="1135" y="793" textLength="18.500" lengthAdjust="spacingAndGlyphs">true</text>
<text class="d" x="1135" y="813" textLength="18.500" lengthAdjust="spacingAndGlyphs">true</text>
<text class="d" x="1135" y="833" textLength="18.500" lengthAdjust="spacingAndGlyphs">true</text>
<text class="d" x="1136" y="853" textLength="89" lengthAdjust="spacingAndGlyphs">---- S/R settings ----</text>
<g stroke="#9a9a9a"><rect x="1136.500" y="862.500" width="12" height="12" fill="#c0c0c0"/><rect x="1136.500" y="882.500" width="12" height="12" fill="#a9a9a9"/><rect x="1136.500" y="902.500" width="12" height="12" fill="#20b2aa"/><rect x="1136.500" y="922.500" width="12" height="12" fill="#008080"/></g>
<text class="d" x="1152" y="873" textLength="26" lengthAdjust="spacingAndGlyphs">Silver</text>
<text class="d" x="1152" y="893" textLength="45" lengthAdjust="spacingAndGlyphs">DarkGray</text>
<text class="d" x="1152" y="913" textLength="70" lengthAdjust="spacingAndGlyphs">LightSeaGreen</text>
<text class="d" x="1152" y="933" textLength="20" lengthAdjust="spacingAndGlyphs">Teal</text>

<!-- buttons -->
<g fill="#fff" stroke="#d0d0d0"><rect x="1378.500" y="884.500" width="102" height="20" rx="4"/><rect x="1378.500" y="917.500" width="102" height="20" rx="4"/><rect x="1254.500" y="955.500" width="72" height="20" rx="4"/><rect x="1335.500" y="955.500" width="72" height="20" rx="4"/><rect x="1416.500" y="955.500" width="72" height="20" rx="4"/></g>
<text class="d" x="1417" y="899" textLength="23" lengthAdjust="spacingAndGlyphs">Load</text>
<text class="d" x="1417" y="932" textLength="24" lengthAdjust="spacingAndGlyphs">Save</text>
<text class="d" x="1282" y="970" textLength="16" lengthAdjust="spacingAndGlyphs">OK</text>
<text class="d" x="1354.500" y="970" textLength="33" lengthAdjust="spacingAndGlyphs">Cancel</text>
<text class="d" x="1438" y="970" textLength="27" lengthAdjust="spacingAndGlyphs">Reset</text>
<path d="M1494 977h1.500v1.500H1494zM1490.500 980.500h1.500v1.500h-1.500zM1494 980.500h1.500v1.500H1494zM1487 980.500h1.500v1.500H1487z" fill="#bdbdbd"/>
</svg>
</body>
</html>
